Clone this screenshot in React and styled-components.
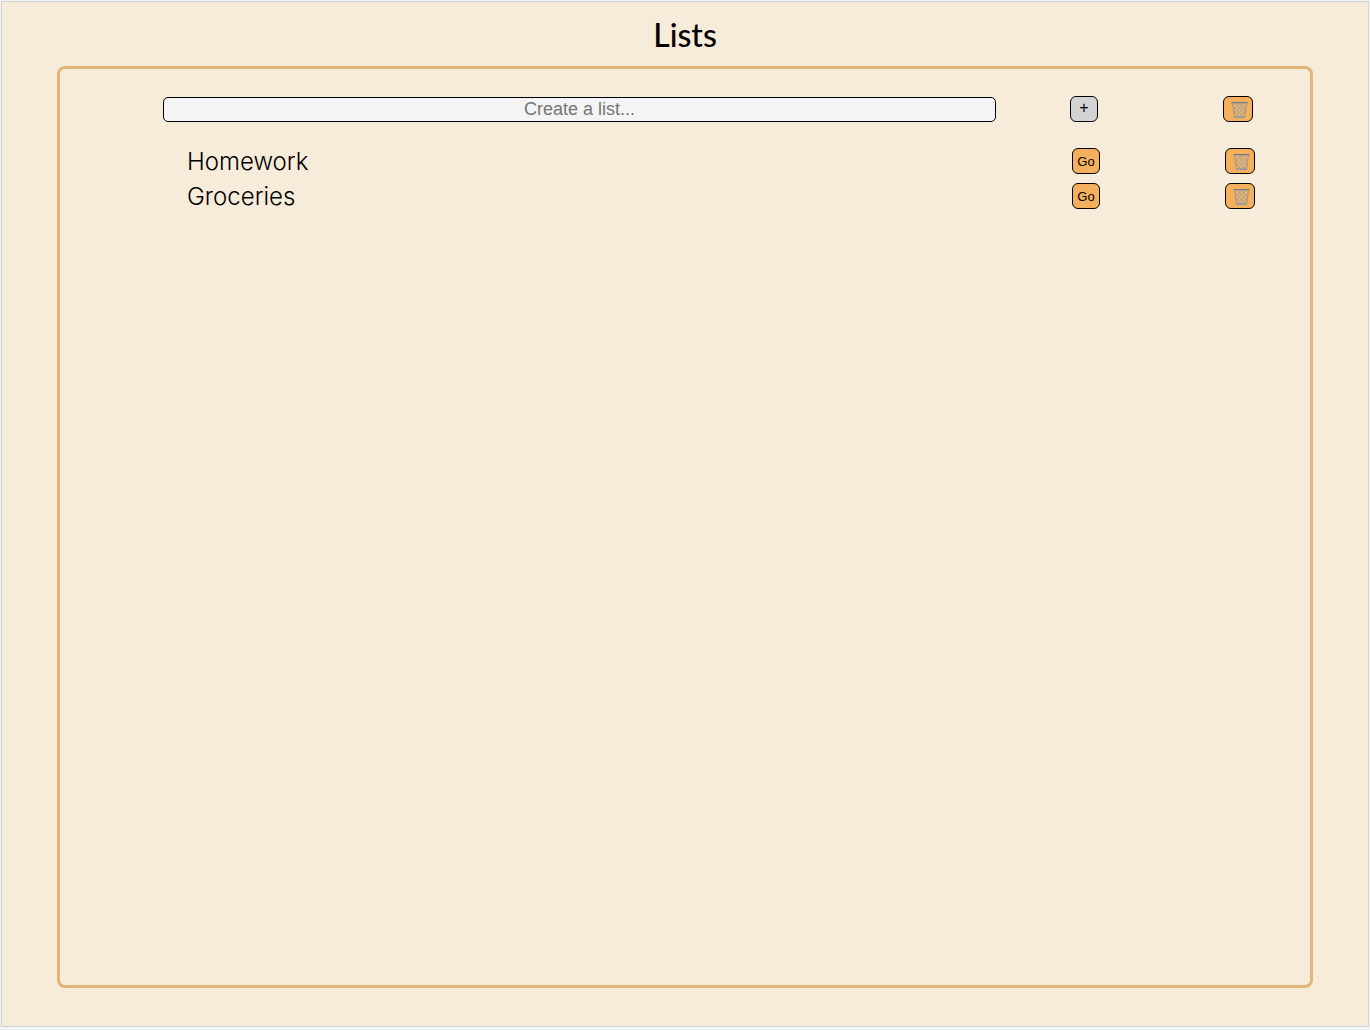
import React, { useState } from "react";
import styled, { createGlobalStyle } from "styled-components";

const GlobalStyle = createGlobalStyle`
  *, *::before, *::after { box-sizing: border-box; }
  body {
    margin: 0;
    background: #f2f3f3;
    color: #000;
    font-family: Lato, "Liberation Sans", sans-serif;
  }
`;

const Shell = styled.div`
  display: flex;
  min-height: 100vh;
  padding: 1px 1px 3px;
`;

const Page = styled.main`
  flex: 1;
  display: flex;
  flex-direction: column;
  padding: 0 55px 38px;
  border: 1px solid #d3d4d8;
  background: #f7ebd9;
`;

const Title = styled.h1`
  margin: 0;
  padding: 13px 0 11px;
  font-size: 32px;
  line-height: 40px;
  font-weight: 500;
  text-align: center;
`;

const Panel = styled.section`
  flex: 1;
  padding-top: 27px;
  border: 3px solid #e3b577;
  border-radius: 8px;
`;

const columns = `
  display: grid;
  grid-template-columns: 1fr 176px 132px;
  align-items: center;
  justify-items: center;
`;

const CreateForm = styled.form`
  ${columns}
  padding: 0 6px 0 103px;
`;

const ListInput = styled.input`
  width: 100%;
  height: 25px;
  margin-top: 1px;
  padding: 0 8px;
  border: 1px solid #000;
  border-radius: 5px;
  background: #f4f4f4;
  font: 18px/22px "Liberation Sans", Arial, sans-serif;
  text-align: center;
  &::placeholder { color: #757575; opacity: 1; }
`;

const Lists = styled.ul`
  display: grid;
  gap: 9px;
  margin: 26px 0 0;
  padding: 0;
  list-style: none;
`;

const ListRow = styled.li`
  ${columns}
  padding: 0 4px 0 127px;
`;

const ListName = styled.span`
  justify-self: start;
  padding-top: 2px;
  font-family: Inter, "Liberation Sans", sans-serif;
  font-size: 24px;
  line-height: 24px;
  font-weight: 300;
`;

const Button = styled.button`
  display: flex;
  align-items: center;
  justify-content: center;
  width: ${(p) => (p.$wide ? 30 : 28)}px;
  height: 26px;
  padding: ${(p) => (p.$wide ? "1px 0 0 3px" : "2px 0 0")};
  border: 1px solid #000;
  border-radius: 6px;
  background: ${(p) => (p.$muted ? "#d3d3d3" : "#f4b05c")};
  color: #000;
  font: 13px/16px "Liberation Sans", Arial, sans-serif;
  cursor: pointer;
`;

const PlusButton = styled(Button)`
  padding: 0 0 2px;
  font-size: 16px;
`;

function Basket() {
  return (
    <svg width="17" height="18" viewBox="0 0 17 18" aria-hidden="true">
      <path d="M1.500 2h14l-1.900 14.500H3.400z" fill="#dcb684" />
      <path
        d="M2 5l11 11M4 2.500l10 10M8 2.500l7 7M2.500 10l6 6M15 5L4 16M13 2.500L3 12.500M9 2.500L2 9.500M14 10l-6 6"
        stroke="#b08d68" strokeWidth=".6" fill="none"
      />
      <path d="M1.500 2l2 14M15.500 2l-2 14" stroke="#a08f7a" strokeWidth=".9" fill="none" />
      <path d="M.5 1h16v1.400H.5z" fill="#777a7c" />
      <path d="M1 2.700h15" stroke="#b9a68c" strokeWidth=".7" />
      <path d="M3.200 15.500h10.600l-.3 1.500h-10z" fill="#8e98a3" />
    </svg>
  );
}

export default function App() {
  const [name, setName] = useState("");
  const [lists, setLists] = useState(["Homework", "Groceries"]);

  const addList = (event) => {
    event.preventDefault();
    if (!name.trim()) return;
    setLists([...lists, name.trim()]);
    setName("");
  };

  return (
    <>
      <GlobalStyle />
      <Shell>
        <Page>
          <Title>Lists</Title>
          <Panel>
            <CreateForm onSubmit={addList}>
              <ListInput
                aria-label="List name"
                placeholder="Create a list..."
                value={name}
                onChange={(event) => setName(event.target.value)}
              />
              <PlusButton type="submit" $muted aria-label="Add list">+</PlusButton>
              <Button type="button" $wide aria-label="Delete all lists" onClick={() => setLists([])}>
                <Basket />
              </Button>
            </CreateForm>
            <Lists>
              {lists.map((list, index) => (
                <ListRow key={index}>
                  <ListName>{list}</ListName>
                  <Button type="button">Go</Button>
                  <Button
                    type="button"
                    $wide
                    aria-label={`Delete ${list}`}
                    onClick={() => setLists(lists.filter((_, i) => i !== index))}
                  >
                    <Basket />
                  </Button>
                </ListRow>
              ))}
            </Lists>
          </Panel>
        </Page>
      </Shell>
    </>
  );
}
